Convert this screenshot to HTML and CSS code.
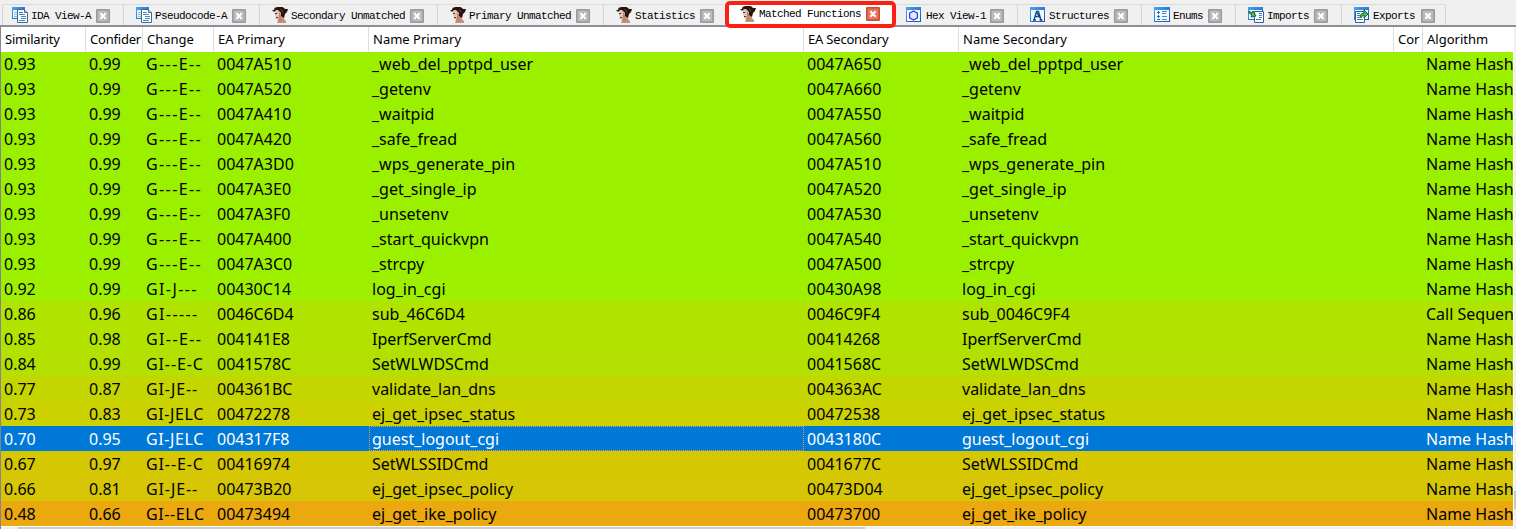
FILE: index.html
```html
<!DOCTYPE html>
<html lang="en">
<head>
<meta charset="utf-8">
<title>Matched Functions</title>
<link rel="stylesheet" href="styles.css">
</head>
<body>
<svg class="defs" width="0" height="0">
  <defs>
    <linearGradient id="blue" x1="0" y1="0" x2="1" y2="1"><stop offset="0" stop-color="#48a8f4"/><stop offset="1" stop-color="#1450b8"/></linearGradient>
    <symbol id="i-docs" viewBox="0 0 16 16"><path fill="url(#blue)" d="M0 0h13v12H0z"/><path fill="#e7f5ff" d="M1 3h9v8H1z"/><path stroke="#91bddd" d="M2 5.500h3M2 7.500h3M2 9.500h3"/><path fill="#fff" stroke="#356d9d" d="M5.500 2.500h7l3 3v10h-10z"/><path fill="#c7e2f5" stroke="#356d9d" d="M12.500 2.500v3h3"/><path stroke="#4988b8" d="M7 5.500h4M7 7.500h6M9 9.500h5M9 11.500h5M7 13.500h6"/></symbol>
    <symbol id="i-lady" viewBox="0 0 16 16"><path fill="#c99378" d="M6 8h5l1 4 2 2v2H5l1-3z"/><path fill="#e2c2b0" d="M3 3q3-2 4 1l2 6-3 3-2-1-1-5z"/><path fill="#b98770" d="M7 5l2 2v5l2 2-3 1-2-2 1-3z"/><path fill="#24130f" d="M2 3Q2 0 6 0q5-1 7 2l3 0-1 3-2 2-1 4-3-2V6L6 3 4 3 2 5 0 3z"/><path fill="#714234" d="M6 1l4 2 2 3-2-1-2-3z"/><path fill="#513129" d="M3 6h2v1H3zM4 10h2v1H4z"/></symbol>
    <symbol id="i-frame" viewBox="0 0 16 16"><path fill="url(#blue)" d="M0 0h15v15H0z"/><path fill="#f1faff" d="M1 3h13v11H1z"/></symbol>
    <symbol id="i-hex" viewBox="0 0 16 16"><use href="#i-frame"/><path fill="#e5e9ff" stroke="#303de0" stroke-width="1.200" d="M7.500 4l3.900 2.200v4.600L7.500 13l-3.900-2.200V6.200z"/></symbol>
    <symbol id="i-struct" viewBox="0 0 16 16"><use href="#i-frame"/><path fill="none" stroke="#164675" stroke-width="1.300" d="M4 13l2.500-8.500h2L11 13M5.500 9.500h4M3 13h3M9.500 13h3M6.500 5l3.500 6"/></symbol>
    <symbol id="i-enum" viewBox="0 0 16 16"><path fill="url(#blue)" d="M0 0h16v15H0z"/><path fill="#f1faff" d="M1 3h14v11H1z"/><path stroke="#286bb3" d="M3 5.500h3M3 9.500h3M3 12.500h3M4.500 4v3M4.500 8v3"/><path stroke="#438fc5" d="M8 4.500h5M8 6.500h4M8 9.500h5M8 12.500h5"/></symbol>
    <symbol id="i-import" viewBox="0 0 16 16"><path fill="url(#blue)" d="M0 0h15v13H0z"/><path fill="#eef9ff" d="M1 3h13v9H1z"/><path fill="#fff" stroke="#2964a6" d="M6.500 4.500h9v11h-9z"/><path stroke="#4e7dac" d="M11 6.500h3M11 8.500h3M11 10.500h3M8 12.500h5"/><path fill="#56b75b" stroke="#176b2c" d="M1 4l3 2 1-2 3 5-5 1 1-2-3-2z"/></symbol>
    <symbol id="i-export" viewBox="0 0 16 16"><path fill="url(#blue)" d="M0 0h15v13H0z"/><path fill="#eef9ff" d="M1 3h13v9H1z"/><path fill="#fff" stroke="#2964a6" d="M1.500 4.500h9v11h-9z"/><path stroke="#4e7dac" d="M3 6.500h3M3 8.500h3M3 10.500h3M3 12.500h6"/><path fill="#56b75b" stroke="#176b2c" d="M6 9q1-3 4-3V3l4 4-4 4V8q-2 0-3 3z"/></symbol>
    <symbol id="i-close" viewBox="0 0 14 14"><rect class="close-box" x=".75" y=".75" width="12.500" height="12.500" rx=".5"/><path class="close-x" d="M4.300 4.300l5.400 5.400M9.700 4.300L4.300 9.700"/></symbol>
  </defs>
</svg>
<main class="window">
  <nav class="tabs" id="tabs"></nav>
  <div class="pane">
    <div class="table">
      <div class="row head"><span>Similarity</span><span>Confider</span><span>Change</span><span>EA Primary</span><span>Name Primary</span><span>EA Secondary</span><span>Name Secondary</span><span>Cor</span><span>Algorithm</span></div>
      <div class="body" id="body"></div>
      <div class="hscroll"><div class="hthumb"></div></div>
    </div>
    <div class="vscroll"><div class="vthumb"></div></div>
  </div>
</main>
<script src="app.js"></script>
</body>
</html>
```
FILE: styles.css
```css
* { box-sizing: border-box; }
body { margin: 0; background: #f0f0f0; color: #000; overflow: hidden; font-family: "Noto Sans", "Open Sans", sans-serif; }
.defs { display: block; }
.window { width: 1516px; height: 529px; display: flex; flex-direction: column; }
.tabs { height: 27px; flex: none; display: flex; padding: 4px 0 0 2px; border-bottom: 2px solid #8e8d99; }
.tab { --box: #b9b9b9; --edge: #999; height: 21px; flex: none; display: flex; align-items: center; border-top: 1px solid #dadada; border-left: 1px solid #d5d5d5; padding: 0 13px 0 12px; font: 11px/18px "Liberation Mono", monospace; letter-spacing: -.6px; white-space: pre; }
.tab:first-child { padding-left: 9px; }
.tab:last-child { border-right: 1px solid #d5d5d5; padding-right: 10px; }
.tab .icon { width: 16px; height: 16px; flex: none; margin-right: 3px; }
.tab .close { width: 14px; height: 14px; flex: none; margin-left: auto; margin-top: 1px; }
.tab .name { padding-top: 1px; }
.close-box { fill: var(--box); stroke: var(--edge); stroke-width: 1.5; }
.close-x { stroke: #fff; stroke-width: 2.2; }
.tab.active { --box: #e67458; --edge: #cb4c36; position: relative; height: 27px; margin: -3px -1px -3px -2px; padding: 0 12px 2px 11px; background: #fff; border: 4px solid #fc2014; border-radius: 5px; z-index: 1; }
.tab.after-active { padding-left: 10px; border-left-color: transparent; }
.after-active .icon { margin-right: 4px; }
.pane { display: flex; flex: 1; min-height: 0; border-left: 1px solid #84848c; }
.table { width: 1512px; flex: none; display: flex; flex-direction: column; background: #fff; }
.row { display: grid; grid-template-columns: 85px 57px 71px 155px 435px 155px 435px 29px 90px; height: 25px; flex: none; }
.row span { overflow: hidden; white-space: pre; padding-left: 3px; font-size: 16px; line-height: 26px; }
.row .wide { letter-spacing: 1.4px; }
.row .mid { letter-spacing: .9px; }
.row .snug { letter-spacing: .6px; }
.row.head span { font-size: 13px; line-height: 25px; padding-left: 4px; border-right: 1px solid #dedede; }
.row.head span:nth-child(1), .row.head span:nth-child(2), .row.head span:nth-child(6) { letter-spacing: -.2px; }
.row.head span:last-child { border-right: 0; }
.body { height: 474px; flex: none; display: flex; flex-direction: column; justify-content: flex-end; overflow: hidden; }
.selected { color: #fff; }
.selected span:nth-child(5) { outline: 1px dotted #e49b5c; outline-offset: -1px; }
.hscroll { flex: 1; margin-top: 1px; background: #f0f0f0; padding-left: 17px; }
.hthumb { width: 847px; height: 2px; background: #cdcdcd; }
.vscroll { flex: 1; border-left: 1px solid #fff; padding-top: 464px; }
.vthumb { height: 18px; background: #c8c8c8; }
```
FILE: app.js
```js
const tabs = [
  ["IDA View-A", "docs", 121], ["Pseudocode-A", "docs", 136],
  ["Secondary Unmatched", "lady", 178], ["Primary Unmatched", "lady", 166],
  ["Statistics", "lady", 124], ["Matched Functions", "lady", 171],
  ["Hex View-1", "hex", 122], ["Structures", "struct", 124],
  ["Enums", "enum", 94], ["Imports", "import", 106], ["Exports", "export", 105]
];
document.getElementById("tabs").innerHTML = tabs.map(([name, icon, width], i) =>
  `<div class="tab${i === 5 ? " active" : i === 6 ? " after-active" : ""}" style="width:${width}px"><svg class="icon"><use href="#i-${icon}"/></svg><span class="name">${name}</span><svg class="close"><use href="#i-close"/></svg></div>`).join("");

const rows = [
  ["#9bf000", "0.93|0.99|G---E--|0047A510|_web_del_pptpd_user|0047A650|_web_del_pptpd_user"],
  ["#9bf000", "0.93|0.99|G---E--|0047A520|_getenv|0047A660|_getenv"],
  ["#9bf000", "0.93|0.99|G---E--|0047A410|_waitpid|0047A550|_waitpid"],
  ["#9bf000", "0.93|0.99|G---E--|0047A420|_safe_fread|0047A560|_safe_fread"],
  ["#9bf000", "0.93|0.99|G---E--|0047A3D0|_wps_generate_pin|0047A510|_wps_generate_pin"],
  ["#9bf000", "0.93|0.99|G---E--|0047A3E0|_get_single_ip|0047A520|_get_single_ip"],
  ["#9bf000", "0.93|0.99|G---E--|0047A3F0|_unsetenv|0047A530|_unsetenv"],
  ["#9bf000", "0.93|0.99|G---E--|0047A400|_start_quickvpn|0047A540|_start_quickvpn"],
  ["#9bf000", "0.93|0.99|G---E--|0047A3C0|_strcpy|0047A500|_strcpy"],
  ["#9ff000", "0.92|0.99|GI-J---|00430C14|log_in_cgi|00430A98|log_in_cgi"],
  ["#b0e400", "0.86|0.96|GI-----|0046C6D4|sub_46C6D4|0046C9F4|sub_0046C9F4"],
  ["#b1e200", "0.85|0.98|GI--E--|004141E8|IperfServerCmd|00414268|IperfServerCmd"],
  ["#b3e000", "0.84|0.99|GI--E-C|0041578C|SetWLWDSCmd|0041568C|SetWLWDSCmd"],
  ["#c4d600", "0.77|0.87|GI-JE--|004361BC|validate_lan_dns|004363AC|validate_lan_dns"],
  ["#cbd200", "0.73|0.83|GI-JELC|00472278|ej_get_ipsec_status|00472538|ej_get_ipsec_status"],
  ["#0078d7", "0.70|0.95|GI-JELC|004317F8|guest_logout_cgi|0043180C|guest_logout_cgi"],
  ["#d5c803", "0.67|0.97|GI--E-C|00416974|SetWLSSIDCmd|0041677C|SetWLSSIDCmd"],
  ["#d6c605", "0.66|0.81|GI-JE--|00473B20|ej_get_ipsec_policy|00473D04|ej_get_ipsec_policy"],
  ["#eba80f", "0.48|0.66|GI--ELC|00473494|ej_get_ike_policy|00473700|ej_get_ike_policy"]
];
const spacing = flags => {
  const dashes = flags.split("-").length - 1;
  return dashes > 3 ? "wide" : dashes > 2 ? "mid" : "snug";
};
document.getElementById("body").innerHTML = rows.map(([color, line], i) => {
  const cells = [...line.split("|"), "", i === 10 ? "Call Sequen" : "Name Hash"];
  return `<div class="row${i === 15 ? " selected" : ""}" style="background:${color}">${cells.map((c, n) => `<span${n === 2 ? ` class="${spacing(c)}"` : ""}>${c}</span>`).join("")}</div>`;
}).join("");
```
